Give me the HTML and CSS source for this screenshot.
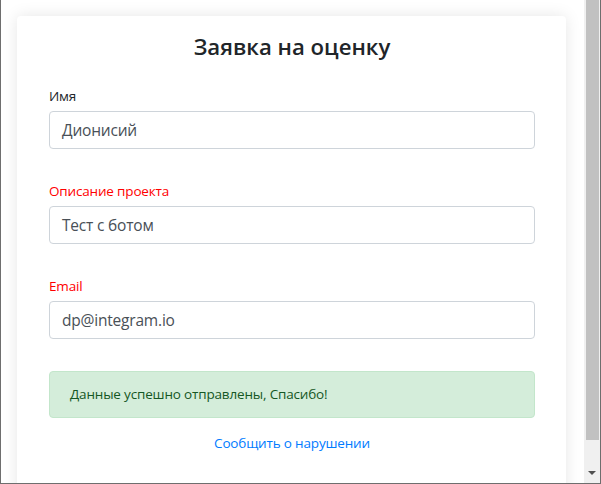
FILE: index.html
```html
<!DOCTYPE html>
<html lang="ru">
<head>
<meta charset="utf-8">
<title>Заявка на оценку</title>
<link rel="stylesheet" href="styles.css">
</head>
<body>
<div class="window">
  <div class="viewport">
    <div class="card">
      <h1 class="title">Заявка на оценку</h1>
      <div class="group">
        <label class="label">Имя</label>
        <div class="input">Дионисий</div>
      </div>
      <div class="group">
        <label class="label label-error">Описание проекта</label>
        <div class="input">Тест с ботом</div>
      </div>
      <div class="group">
        <label class="label label-error">Email</label>
        <div class="input">dp@integram.io</div>
      </div>
      <div class="alert">Данные успешно отправлены, Спасибо!</div>
      <div class="report"><a class="report-link" href="#">Сообщить о нарушении</a></div>
    </div>
  </div>
  <div class="scrollbar">
    <div class="thumb"></div>
    <div class="track"></div>
    <div class="arrow-box"><div class="arrow"></div></div>
  </div>
</div>
</body>
</html>
```

FILE: styles.css
```css
* { box-sizing: border-box; }
html, body { margin: 0; padding: 0; background: #fff; }
body { font-family: "Open Sans", "Noto Sans", sans-serif; }

.window {
  width: 601px;
  height: 484px;
  display: flex;
  border-left: 1px solid #6e6e6e;
  border-right: 1px solid #6e6e6e;
  border-bottom: 1px solid #6e6e6e;
  overflow: hidden;
}

.viewport {
  flex: 1;
  overflow: hidden;
  background: #fff;
  padding: 16px 18px 0 16px;
}

.card {
  background: #fff;
  box-shadow: 0 0 16px rgba(0, 0, 0, 0.10);
  border-radius: 4px;
  padding: 18px 31px 40px 32px;
  min-height: 600px;
}

.title {
  margin: 0 0 26px;
  font-size: 22.2px;
  line-height: 26px;
  font-weight: 600;
  color: #212529;
  text-align: center;
}

.group { margin-bottom: 32px; }

.label {
  display: block;
  font-size: 13.5px;
  letter-spacing: -0.17px;
  line-height: 21px;
  color: #212529;
  margin-bottom: 4px;
}
.label-error { color: #ff0000; }

.input {
  height: 38px;
  border: 1px solid #ced4da;
  border-radius: 4px;
  padding: 0 12px;
  font-size: 15.5px;
  letter-spacing: -0.2px;
  line-height: 36px;
  color: #495057;
  background: #fff;
}

.alert {
  background: #d4edda;
  border: 1px solid #c3e6cb;
  border-radius: 4px;
  color: #155724;
  font-size: 13.5px;
  letter-spacing: -0.17px;
  line-height: 21px;
  padding: 12px 20px;
}

.report {
  margin-top: 15px;
  text-align: center;
  font-size: 13.5px;
  letter-spacing: -0.17px;
  line-height: 21px;
}
.report-link { color: #007bff; text-decoration: none; }

.scrollbar {
  width: 16px;
  background: #f0f0f0;
  display: flex;
  flex-direction: column;
}
.thumb {
  height: 440px;
  margin: 0 1px 0 2px;
  background: #c1c1c1;
}
.track { flex: 1; }
.arrow-box {
  height: 17px;
  display: flex;
  justify-content: center;
  padding-top: 5px;
}
.arrow {
  width: 0;
  height: 0;
  border-left: 4px solid transparent;
  border-right: 4px solid transparent;
  border-top: 4px solid #505050;
}
```
